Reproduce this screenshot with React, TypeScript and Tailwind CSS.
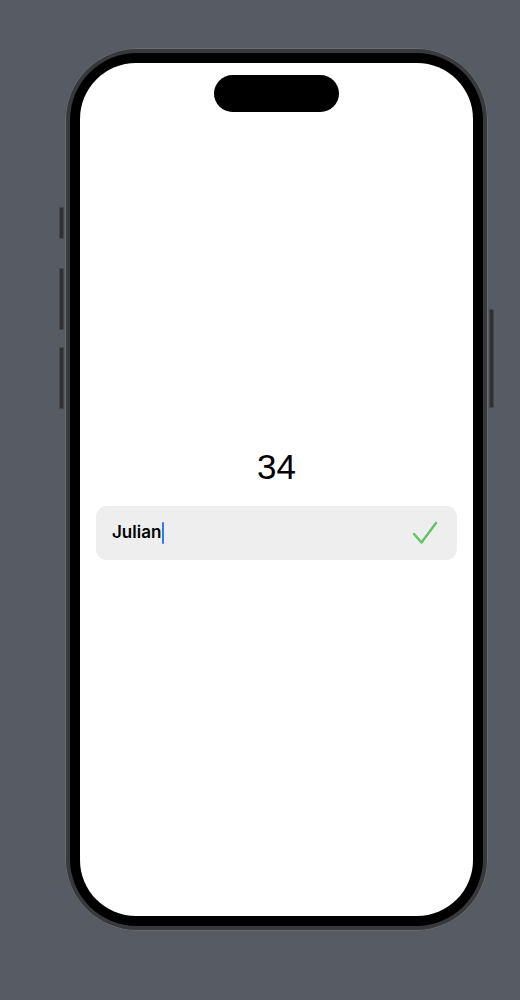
import React from "react";

function SideButton({ className }: { className: string }) {
  return <div className={`absolute w-[5px] rounded-[1px] bg-[#2f3034] border border-[#45474c] ${className}`} />;
}

export default function App() {
  return (
    <div className="min-h-[1000px] w-[520px] bg-[#575b63] pt-[48px] pl-[65px]" style={{ fontFamily: '"Liberation Sans", Arial, sans-serif' }}>
      <div className="relative w-[423px] h-[883px]">
        {/* hardware buttons */}
        <SideButton className="left-[-6px] top-[159px] h-[32px]" />
        <SideButton className="left-[-6px] top-[220px] h-[62px]" />
        <SideButton className="left-[-6px] top-[299px] h-[62px]" />
        <SideButton className="right-[-6px] top-[261px] h-[99px]" />

        <div className="h-full w-full rounded-[72px] bg-[#38393c] p-[5px] shadow-[inset_0_0_0_1px_#6a6c70]">
          <div className="h-full w-full rounded-[67px] bg-black p-[10px]">
            <div className="relative flex h-full w-full flex-col items-center justify-center rounded-[56px] bg-white pt-[62px] pb-[34px]">
              {/* dynamic island */}
              <div className="absolute top-[12px] left-[134px] h-[37px] w-[125px] rounded-full bg-black" />

              <div className="text-[35px] leading-[38px] text-black">34</div>

              <div className="mt-[20px] flex h-[54px] w-[361px] items-center rounded-[11px] bg-[#eeeeef] pl-[16px] pr-[19px]">
                <span className="text-[17px] font-semibold text-black" style={{ fontFamily: 'Inter, "Liberation Sans", sans-serif' }}>
                  Julian
                </span>
                <span className="ml-[1px] h-[22px] w-[2px] rounded-full bg-[#3478f6]" />
                <div className="flex-1" />
                <svg width="26" height="24" viewBox="0 0 26 24" fill="none">
                  <path d="M2 13 L9.5 21.5 L24 2" stroke="#5ec464" strokeWidth="2.4" strokeLinecap="round" strokeLinejoin="round" />
                </svg>
              </div>
            </div>
          </div>
        </div>
      </div>
    </div>
  );
}
